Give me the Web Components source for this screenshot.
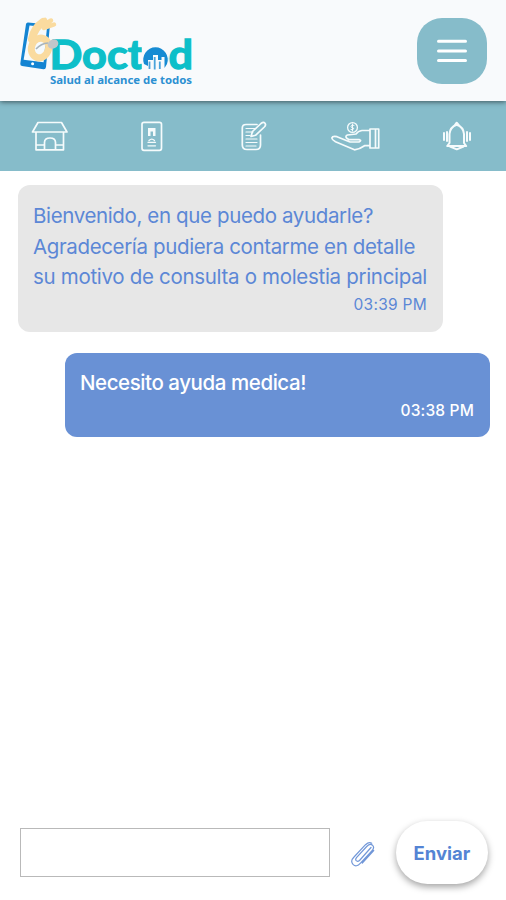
<!DOCTYPE html>
<html lang="es">
<head>
<meta charset="UTF-8">
<meta name="viewport" content="width=device-width, initial-scale=1.0">
<title>Doctod</title>
<style>
    body {
        margin: 0;
        height: 100vh;
        overflow: hidden;
        background-color: #fff;
        font-family: Inter, "Liberation Sans", sans-serif;
    }
</style>
</head>
<body>
<chat-app>
    <app-header slot="header"></app-header>
    <app-nav slot="nav"></app-nav>
    <chat-message>
        <text-line width="340">Bienvenido, en que puedo ayudarle?</text-line>
        <text-line width="382">Agradecería pudiera contarme en detalle</text-line>
        <text-line width="394">su motivo de consulta o molestia principal</text-line>
        <text-line slot="time" width="73.5" small>03:39 PM</text-line>
    </chat-message>
    <chat-message sent>
        <text-line width="226">Necesito ayuda medica!</text-line>
        <text-line slot="time" width="73.5" small>03:38 PM</text-line>
    </chat-message>
    <message-form slot="footer">Enviar</message-form>
</chat-app>

<script>
class BaseElement extends HTMLElement {
    constructor() {
        super();
        this.attachShadow({mode: "open"});
        const template = document.createElement('template');
        template.innerHTML = this.getStyles() + this.getTemplate();
        this.shadowRoot.appendChild(template.content.cloneNode(true));
    }
}

class ChatApp extends BaseElement {
    getTemplate() {
        return /*html*/`
            <slot name="header"></slot>
            <slot name="nav"></slot>
            <main><slot></slot></main>
            <slot name="footer"></slot>
        `;
    }
    getStyles() {
        return /*html*/`
        <style>
            :host {
                display: flex;
                flex-direction: column;
                height: 100%;
            }
            main {
                flex: 1;
                display: flex;
                flex-direction: column;
                gap: 21px;
                padding: 14px 16px 0 18px;
            }
        </style>
        `;
    }
}

class AppHeader extends BaseElement {
    getTemplate() {
        return /*html*/`
            <svg class="logo" width="200" height="85" viewBox="10 10 200 85">
                <!-- phone -->
                <path d="M28 22.5 L48.5 24.5 Q50 25 49.8 26.5 L46 67 Q45.6 69.4 43.5 69.2 L22 66 Q20 65.5 20.3 63.5 L26 24 Q26.4 22.4 28 22.5Z" fill="#1484d2"/>
                <path d="M29.5 25.5 L47 27.2 L43.6 62.2 L23.6 59.8Z" fill="#f5fafd"/>
                <circle cx="32.6" cy="63.8" r="1.5" fill="#fff"/>
                <text class="name" x="49.5" y="68.5" textLength="143.5" lengthAdjust="spacingAndGlyphs">Doctod</text>
                <!-- hand -->
                <path d="M43 22 Q34 28 32 39" fill="none" stroke="#fadb9f" stroke-width="8" stroke-linecap="round"/>
                <path d="M42 26 L51 20.5 M44 28 L54 24.5 M41 23.5 L45 20" fill="none" stroke="#fadb9f" stroke-width="4.5" stroke-linecap="round"/>
                <ellipse cx="40" cy="48" rx="8.5" ry="10" transform="rotate(20 40 48)" fill="none" stroke="#fadb9f" stroke-width="7"/>
                <path d="M36 49 Q41 43.5 48 43" fill="none" stroke="#a8b4bb" stroke-width="1.6"/>
                <ellipse cx="53" cy="44" rx="5.5" ry="4.5" transform="rotate(-25 53 44)" fill="#c0c6ca"/>
                <!-- buildings over the second o -->
                <rect x="141.8" y="43" width="26.2" height="28" fill="#f8fafc"/>
                <path d="M144 64 A12.3 12.3 0 1 1 167 64 L164.5 68 V57 H161.5 V60 H158 V55 H153 V60 H148 V66Z" fill="#168bd3"/>
                <path d="M149.5 61.5 V69 M154.7 57 V69.5 M159.8 61.5 V69" stroke="#4aa3da" stroke-width="1.8"/>
                <text class="tagline" x="50" y="83.5" textLength="142" lengthAdjust="spacingAndGlyphs">Salud al alcance de todos</text>
            </svg>
            <button aria-label="Menu">
                <svg width="32" height="26" viewBox="0 0 32 26" stroke="#fff" stroke-width="3" stroke-linecap="round">
                    <path d="M2.5 3.3H29.5M2.5 13H29.5M2.5 22.5H29.5"/>
                </svg>
            </button>
        `;
    }
    getStyles() {
        return /*html*/`
        <style>
            :host {
                display: flex;
                box-sizing: border-box;
                flex: none;
                justify-content: space-between;
                align-items: center;
                height: 101px;
                padding: 0 19px 0 10px;
                background-color: #f8fafc;
                box-shadow: 0 1px 5px rgba(0, 0, 0, .55);
                position: relative;
                z-index: 1;
            }
            .logo {
                margin-top: 4px;
            }
            .name {
                font: 700 40.5px Lato, sans-serif;
                fill: #0dbfc9;
                stroke: #0dbfc9;
                stroke-width: 1.3;
            }
            .tagline {
                font: 700 10.5px "Noto Sans", sans-serif;
                fill: #2c90d2;
            }
            button {
                display: flex;
                align-items: center;
                justify-content: center;
                width: 70px;
                height: 66px;
                padding: 0;
                border: none;
                border-radius: 25px;
                background-color: #86bcca;
            }
        </style>
        `;
    }
}

class AppNav extends BaseElement {
    getTemplate() {
        return /*html*/`
            <!-- home -->
            <svg viewBox="-2 120 102 32">
                <path d="M38 122.5H61.5L67 132H32.5ZM36 132V149.8H63.5V132M36 145H43.5M56 145H63.5M44.5 149.5V142.5Q44.5 138 50 138T55.5 142.5V149.5"/>
            </svg>
            <!-- record -->
            <svg viewBox="100 120 102 32">
                <rect x="142" y="122.3" width="19.5" height="28" rx="2"/>
                <path class="solid" d="M148 128H155.5V136H153V131.5H150.5V136H148Z"/>
                <path d="M149 140.5Q151.8 137.8 154.5 140.5M148 142.3H155.5M148 145.8H155.5" stroke-width="1.3"/>
            </svg>
            <!-- note -->
            <svg viewBox="202 120 102 32">
                <path d="M257 124.5H246Q242.3 124.5 242.3 128V145Q242.3 149.5 247 149.5H256Q260.5 149.5 260.5 145V135"/>
                <path d="M246 128.5H255M246 132H253M246 135.5H250M246 139H257M246 142.5H257M246 146H256" stroke-width="1.2"/>
                <path d="M251 136.5L252.5 131.5L261 123.5Q263.5 121.5 265 123.2Q266.3 125 264.3 127L255.5 135.3Z"/>
            </svg>
            <!-- payment -->
            <svg viewBox="304 120 102 32">
                <circle cx="352.5" cy="127.5" r="4.9" stroke-width="1.3"/>
                <path d="M354 125.3Q351 124.5 351 126.3T353.5 128Q354.3 130 351 129.6M352.5 124V131" stroke-width="1"/>
                <path d="M369 130.5H362Q358 131 356 134L347.5 135Q345 136 346.5 138L349 139.7H359.5Q362 140.5 359 142H350L337 136.7Q332.5 135.7 331.8 138Q332 139.8 335.5 141.7L354.5 149.8Q360 149 364.5 145.7H369M370 129H378.7V148H370ZM375.5 130V147"/>
            </svg>
            <!-- bell -->
            <svg viewBox="406 120 102 32">
                <path d="M449.5 143V134Q450 127 456.7 124.7Q463.5 127 464 134V143L466.2 146H447.2ZM454.5 125.5L456.7 122.7L459 125.5M450 146.5L456.8 149.3L463.5 146.5" stroke-width="2"/>
                <path d="M447 132V141M444 133V140M467 132V141M470 133V140" stroke-width="2"/>
            </svg>
        `;
    }
    getStyles() {
        return /*html*/`
        <style>
            :host {
                display: grid;
                grid-template-columns: repeat(5, 102px);
                justify-content: center;
                align-items: center;
                flex: none;
                height: 70px;
                background-color: #86bcca;
                overflow: hidden;
            }
            svg {
                width: 102px;
                height: 32px;
                fill: none;
                stroke: #f5fbfc;
                stroke-width: 1.7;
                stroke-linejoin: round;
                stroke-linecap: round;
            }
            .solid {
                fill: #f5fbfc;
                stroke: none;
            }
        </style>
        `;
    }
}

class ChatMessage extends BaseElement {
    getTemplate() {
        return /*html*/`
            <slot></slot>
            <slot name="time"></slot>
        `;
    }
    getStyles() {
        return /*html*/`
        <style>
            :host {
                display: flex;
                flex-direction: column;
                box-sizing: border-box;
                width: 425px;
                height: 147px;
                padding: 16px 16px 0 15px;
                border-radius: 12px;
                background-color: #e7e7e7;
                color: #5c87d6;
            }
            :host([sent]) {
                align-self: flex-end;
                height: 84px;
                padding-top: 15px;
                background-color: #6991d5;
                color: #fff;
                --weight: 500;
            }
            ::slotted([slot="time"]) {
                align-self: flex-end;
            }
        </style>
        `;
    }
}

class TextLine extends BaseElement {
    getTemplate() {
        return /*html*/`<span><slot></slot></span>`;
    }
    getStyles() {
        return /*html*/`
        <style>
            :host {
                display: block;
                font-size: 20.5px;
                font-weight: var(--weight, 400);
                line-height: 30.7px;
                white-space: nowrap;
            }
            :host([small]) {
                font-size: 15.5px;
                line-height: 23px;
            }
        </style>
        `;
    }
    connectedCallback() {
        const span = this.shadowRoot.querySelector('span');
        const gap = this.getAttribute('width') - span.getBoundingClientRect().width;
        span.style.letterSpacing = gap / this.textContent.length + 'px';
    }
}

class MessageForm extends BaseElement {
    getTemplate() {
        return /*html*/`
            <input type="text" aria-label="Mensaje">
            <svg width="26" height="28" viewBox="350 840 26 28">
                <path d="M371 847.5L359.5 860.5Q357.5 862 356.2 860.7Q355 859.2 356.7 857.3L366.7 846.5Q370 843 372.5 845.2Q375 847.8 371.8 851L360.5 863.2Q356.3 867.7 353 864.4Q350 861 354 857L365.5 844.7Q369 841.3 371.7 843.2M373.7 850.5L362.3 863"/>
            </svg>
            <button><slot></slot></button>
        `;
    }
    getStyles() {
        return /*html*/`
        <style>
            :host {
                display: flex;
                flex: none;
                align-items: center;
                height: 63px;
                padding: 0 18px 16px 20px;
            }
            input {
                box-sizing: border-box;
                width: 310px;
                height: 49px;
                border: 1.5px solid #b9b9b9;
                background-color: #fff;
            }
            svg {
                margin: 2px 20px 0;
                fill: none;
                stroke: #7197d8;
                stroke-width: 1.2;
                stroke-linecap: round;
            }
            button {
                width: 92px;
                height: 63px;
                padding: 0;
                border: none;
                border-radius: 32px;
                background-color: #fff;
                box-shadow: 0 3px 7px rgba(0, 0, 0, .36);
                color: #5484d4;
                font: 700 18.5px Inter, sans-serif;
            }
        </style>
        `;
    }
}

customElements.define('chat-app', ChatApp);
customElements.define('app-header', AppHeader);
customElements.define('app-nav', AppNav);
customElements.define('chat-message', ChatMessage);
customElements.define('text-line', TextLine);
customElements.define('message-form', MessageForm);
</script>
</body>
</html>
